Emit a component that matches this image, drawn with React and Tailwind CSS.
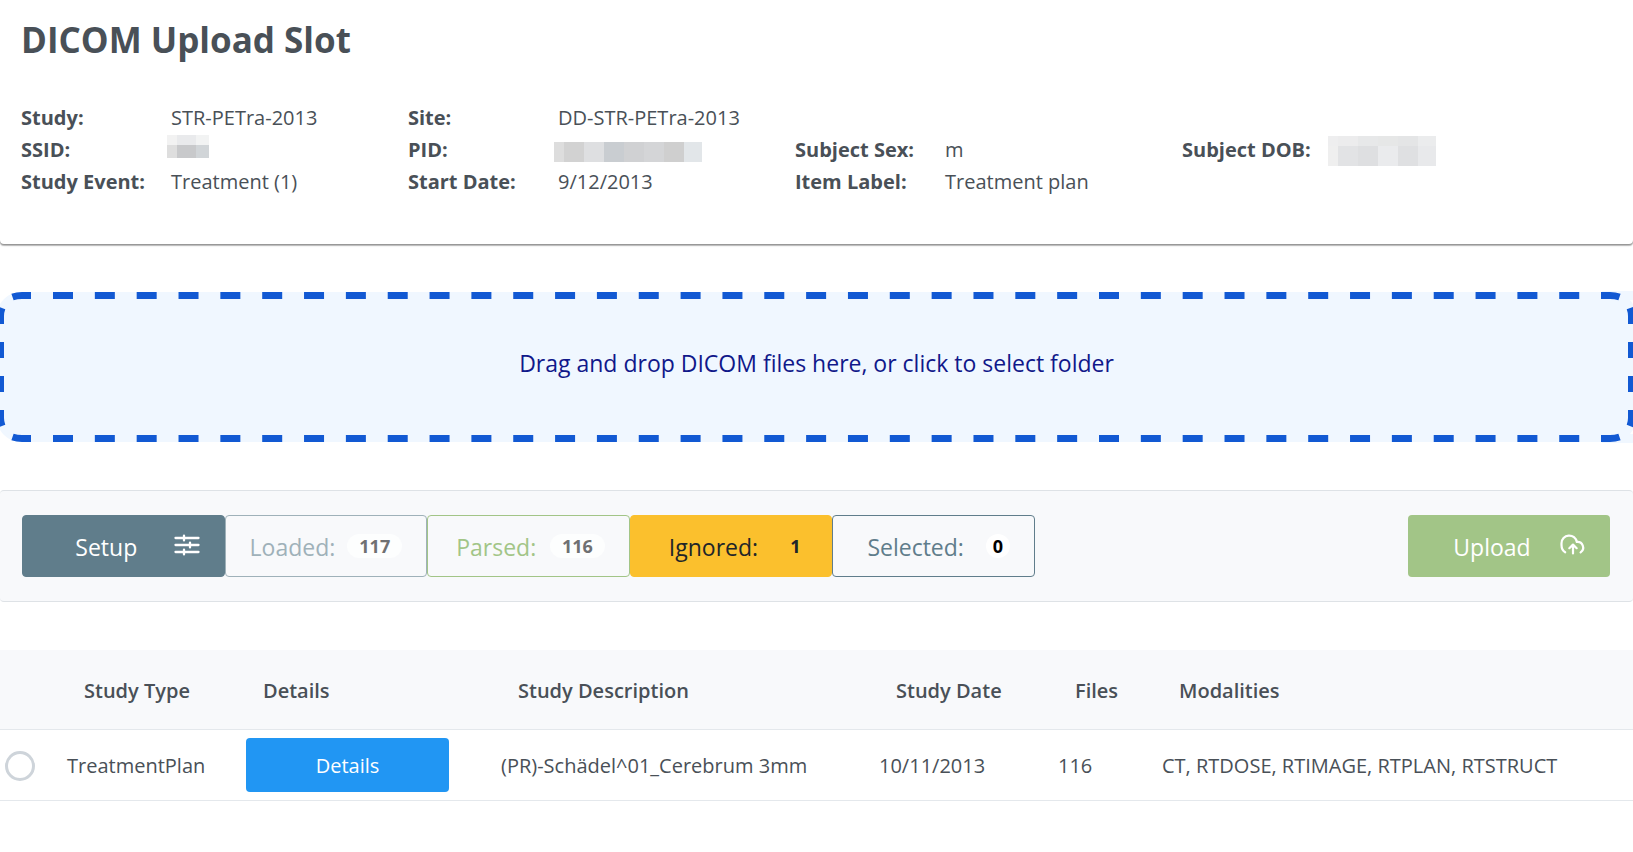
import React from "react";

function Mosaic({ width, height, cells, label, className }) {
  return (
    <svg
      width={width}
      height={height}
      role="img"
      aria-label={label}
      shapeRendering="crispEdges"
      className={className}
    >
      {cells.map(([x, y, w, h, fill]) => (
        <rect key={`${x}-${y}`} x={x} y={y} width={w} height={h} fill={fill} />
      ))}
    </svg>
  );
}

const ssidCells = [
  [0, 0, 10, 10, "#f2f2f2"],
  [10, 0, 19, 10, "#e9eaec"],
  [29, 0, 13, 10, "#f2f3f3"],
  [0, 10, 10, 13, "#dedede"],
  [10, 10, 19, 13, "#c8c9cb"],
  [29, 10, 13, 13, "#d1d5d8"],
];

const pidCells = [
  [0, 0, 10, 20, "#dddddd"],
  [10, 0, 20, 20, "#d2d2d2"],
  [30, 0, 20, 20, "#dedfe1"],
  [50, 0, 20, 20, "#c9cdd1"],
  [70, 0, 20, 20, "#d0d1d3"],
  [90, 0, 20, 20, "#d4d5d7"],
  [110, 0, 20, 20, "#cfcfcf"],
  [130, 0, 18, 20, "#e2e6e9"],
];

const dobCells = [
  [0, 0, 10, 10, "#eeeeef"],
  [10, 0, 20, 10, "#ececed"],
  [30, 0, 20, 10, "#e7e8e9"],
  [50, 0, 20, 10, "#e6e7e7"],
  [70, 0, 20, 10, "#e4e5e6"],
  [90, 0, 18, 10, "#ebeced"],
  [0, 10, 10, 20, "#efefef"],
  [10, 10, 20, 20, "#e2e3e5"],
  [30, 10, 20, 20, "#dedfe1"],
  [50, 10, 20, 20, "#eaebed"],
  [70, 10, 20, 20, "#dfe0e2"],
  [90, 10, 18, 20, "#e8e9eb"],
];

function Field({ label, children, className = "" }) {
  return (
    <div className={`flex h-8 ${className}`}>
      <dt className="w-[150px] shrink-0 font-bold whitespace-nowrap">{label}</dt>
      <dd className="whitespace-nowrap">{children}</dd>
    </div>
  );
}

function SlidersIcon() {
  return (
    <svg width="26" height="22" viewBox="0 0 26 22" fill="none" stroke="currentColor" strokeWidth="2.3" strokeLinecap="round" className="mb-0.5" aria-hidden="true">
      <path d="M1.5 4H8.5M10 1.6V6.4M11.5 4H24.5M1.5 11H14.5M16 8.6V13.4M17.5 11H24.5M1.5 18H8.5M10 15.6V20.4M11.5 18H24.5" />
    </svg>
  );
}

function CloudUploadIcon() {
  return (
    <svg width="26" height="22" viewBox="0 0 26 22" fill="none" stroke="currentColor" strokeWidth="2.2" strokeLinecap="round" strokeLinejoin="round" className="mb-0.5" aria-hidden="true">
      <path d="M5.2 18.3C2.9 17 1.5 14.5 1.5 11V9.2A7.7 7.7 0 0 1 16.8 8A5.7 5.7 0 0 1 20.6 18.4" />
      <path d="M13 19.5V11M9.3 14.2L13 10.6L16.7 14.2" />
    </svg>
  );
}

function DashedFrame() {
  return (
    <svg className="absolute inset-0 h-full w-full" aria-hidden="true" overflow="visible" stroke="#1259d3" fill="none">
      <g strokeWidth="7" strokeDasharray="20 21.84">
        <line x1="56" y1="3.5" x2="100%" y2="3.5" />
        <line x1="56" y1="146.5" x2="100%" y2="146.5" />
      </g>
      <line strokeWidth="7" strokeDasharray="16 18" x1="3.5" y1="50" x2="3.5" y2="101" />
      <path strokeWidth="7" d="M34 3.5H25Q20 3.5 15.5 5M5 16Q3.5 20 3.5 24V32M34 146.5H25Q20 146.5 15.5 145M5 134Q3.5 130 3.5 126V118" />
      <svg x="100%" overflow="visible">
        <rect x="-34" y="-1" width="34" height="9" fill="#f0f7ff" stroke="none" />
        <rect x="-34" y="142" width="34" height="9" fill="#f0f7ff" stroke="none" />
        <line strokeWidth="7" strokeDasharray="16 18" x1="-4.5" y1="50" x2="-4.5" y2="101" />
        <path strokeWidth="7" d="M-35 3.5H-26Q-21 3.5 -16.5 5M-6 16Q-4.5 20 -4.5 24V32M-35 146.5H-26Q-21 146.5 -16.5 145M-6 134Q-4.5 130 -4.5 126V118" />
      </svg>
    </svg>
  );
}

const counter =
  "flex items-center rounded border text-[23px] leading-8 whitespace-nowrap";
const badge =
  "flex h-6 min-w-6 items-center justify-center rounded-full text-[18px] leading-6 font-bold";

const study = {
  type: "TreatmentPlan",
  description: "(PR)-Schädel^01_Cerebrum 3mm",
  date: "10/11/2013",
  files: 116,
  modalities: "CT, RTDOSE, RTIMAGE, RTPLAN, RTSTRUCT",
};

export default function App() {
  return (
    <div className="min-h-screen overflow-x-hidden bg-white font-['Segoe_UI','Open_Sans','Noto_Sans',sans-serif] text-[20px] text-[#495057]">
      <header className="rounded-b-sm pt-[15px] pr-16 pb-[46px] pl-[21px] shadow-[0_1px_0_0_rgba(0,0,0,0.15),0_2px_1px_0_rgba(0,0,0,0.24),0_1px_3px_0_rgba(0,0,0,0.12)]">
        <h1 className="text-[35px] leading-[50px] font-bold">DICOM Upload Slot</h1>
        <dl className="mt-[37px] grid grid-cols-4 leading-8">
          <Field label="Study:">STR-PETra-2013</Field>
          <Field label="Site:" className="col-span-3">DD-STR-PETra-2013</Field>
          <Field label="SSID:">
            <Mosaic width={42} height={23} cells={ssidCells} label="Redacted" className="mt-px -ml-1" />
          </Field>
          <Field label="PID:">
            <Mosaic width={148} height={20} cells={pidCells} label="Redacted" className="mt-2 -ml-1" />
          </Field>
          <Field label="Subject Sex:">m</Field>
          <Field label="Subject DOB:">
            <Mosaic width={108} height={30} cells={dobCells} label="Redacted" className="mt-0.5 -ml-1" />
          </Field>
          <Field label="Study Event:">Treatment (1)</Field>
          <Field label="Start Date:">9/12/2013</Field>
          <Field label="Item Label:">Treatment plan</Field>
        </dl>
      </header>

      <main>
        <button
          type="button"
          className="relative -mx-[3px] mt-12 flex h-[150px] w-[calc(100%+6px)] items-center justify-center rounded-3xl bg-[#f0f7ff] pb-2 text-[23px] text-[#10188a]"
        >
          <DashedFrame />
          <span className="relative">Drag and drop DICOM files here, or click to select folder</span>
        </button>

        <div className="mt-12 flex items-center justify-between rounded border-y border-[#dee2e6] bg-[#f8f9fb] py-6 pr-[23px] pl-[22px]">
          <div className="grid h-[62px] w-[1013px] grid-cols-5">
            <button type="button" className={`${counter} border-[#607d8b] bg-[#607d8b] pr-6 text-white`}>
              <span className="grow pt-0.5 pl-4 text-center">Setup</span>
              <SlidersIcon />
            </button>
            <button type="button" className={`${counter} justify-between border-[#9fb1b9] pr-6 pl-6 text-[#9fb1b9]`}>
              <span className="pt-0.5">Loaded:</span>
              <span className={`${badge} bg-[#fdfefe] px-3 text-[#6f7072]`}>117</span>
            </button>
            <button type="button" className={`${counter} justify-between border-[#a2c587] pr-6 pl-7 text-[#a2c587]`}>
              <span className="pt-0.5">Parsed:</span>
              <span className={`${badge} bg-[#fdfefe] px-3 text-[#6f7072]`}>116</span>
            </button>
            <button type="button" className={`${counter} justify-between border-[#fbc02d] bg-[#fbc02d] pr-6 pl-[38px] text-[#212529]`}>
              <span className="pt-0.5">Ignored:</span>
              <span className={badge}>1</span>
            </button>
            <button type="button" className={`${counter} justify-between border-[#607d8b] pr-6 pl-[34px] text-[#607d8b]`}>
              <span className="pt-0.5">Selected:</span>
              <span className={`${badge} bg-white text-black`}>0</span>
            </button>
          </div>
          <button
            type="button"
            className="flex h-[62px] w-[202px] items-center rounded bg-[#a2c587] pr-6 text-[23px] leading-8 text-white"
          >
            <span className="grow pt-0.5 pl-4 text-center">Upload</span>
            <CloudUploadIcon />
          </button>
        </div>

        <table className="mt-12 w-full table-fixed border-collapse text-left">
          <colgroup>
            <col className="w-[67px]" />
            <col className="w-[179px]" />
            <col className="w-[255px]" />
            <col className="w-[378px]" />
            <col className="w-[179px]" />
            <col className="w-[104px]" />
            <col />
          </colgroup>
          <thead>
            <tr className="h-[79px] border-b border-[#e4e8ec] bg-[#f8f9fb] whitespace-nowrap">
              <th aria-label="Selection" />
              <th className="pt-[3px] pl-[17px] font-semibold">Study Type</th>
              <th className="pt-[3px] pl-[17px] font-semibold">Details</th>
              <th className="pt-[3px] pl-[17px] font-semibold">Study Description</th>
              <th className="pt-[3px] pl-[17px] font-semibold">Study Date</th>
              <th className="pt-[3px] pl-[17px] font-semibold">Files</th>
              <th className="pt-[3px] pl-[17px] font-semibold">Modalities</th>
            </tr>
          </thead>
          <tbody>
            <tr className="h-[71px] border-b border-[#e4e8ec] whitespace-nowrap">
              <td className="pt-0.5 pl-[5px]">
                <input
                  type="radio"
                  name="study"
                  aria-label="Select TreatmentPlan"
                  className="block size-[30px] appearance-none rounded-full border-3 border-[#ced4da] bg-white checked:border-[#2196f3]"
                />
              </td>
              <td className="pt-[3px]">{study.type}</td>
              <td>
                <button type="button" className="block h-[54px] w-[203px] rounded bg-[#2196f3] pt-[3px] text-center text-white">
                  Details
                </button>
              </td>
              <td className="pt-[3px]">{study.description}</td>
              <td className="pt-[3px]">{study.date}</td>
              <td className="pt-[3px]">{study.files}</td>
              <td className="pt-[3px]">{study.modalities}</td>
            </tr>
          </tbody>
        </table>
      </main>
    </div>
  );
}
